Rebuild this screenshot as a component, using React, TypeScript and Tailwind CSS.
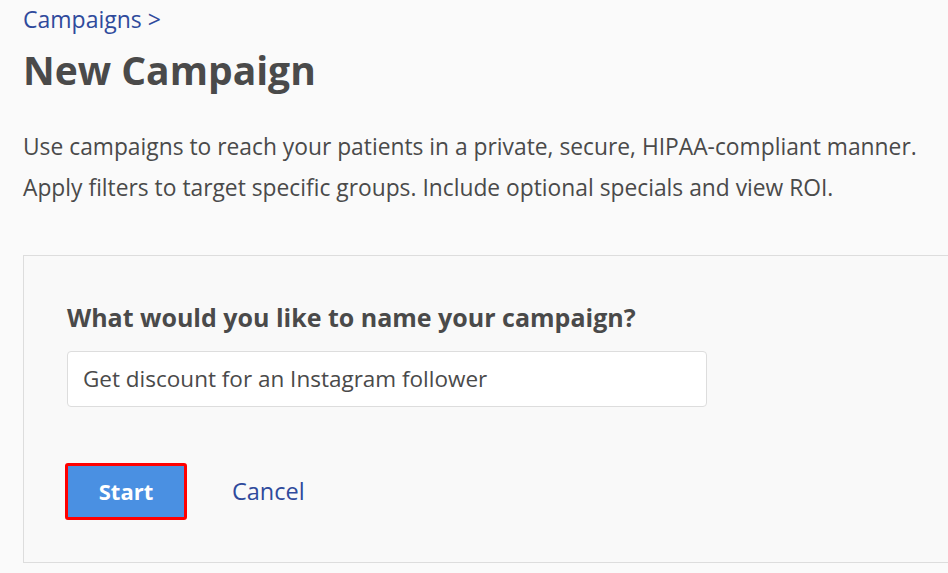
export default function App() {
  return (
    <div className="min-h-[573px] w-[948px] overflow-hidden bg-[#fafafa] text-[#4a4a4a]" style={{ fontFamily: "'Open Sans', Lato, sans-serif" }}>
      <div className="pl-[23px] pt-[4px]">
        <div className="text-[23px] leading-[30px] text-[#2f4a9c]">Campaigns &gt;</div>
        <h1 className="mt-[12px] text-[39px] font-bold leading-[48px] text-[#4a4a4a]">New Campaign</h1>
        <p className="mt-[32px] text-[22.8px] leading-[41px]">
          Use campaigns to reach your patients in a private, secure, HIPAA-compliant manner.
          <br />
          Apply filters to target specific groups. Include optional specials and view ROI.
        </p>
        <div className="mt-[47px] h-[308px] w-[960px] border border-[#dddddd] bg-[#f9f9f9] pl-[43px] pt-[45px]">
          <div className="text-[25px] font-bold leading-[32px] text-[#4a4a4a]">What would you like to name your campaign?</div>
          <div className="mt-[18px] flex h-[56px] w-[640px] items-center rounded-[4px] border border-[#dddddd] bg-white pl-[15px] text-[22.5px]">
            Get discount for an Instagram follower
          </div>
          <div className="mt-[56px] flex items-center">
            <button className="ml-[-2px] h-[57px] w-[122px] rounded-[3px] border-[3px] border-[#ff0000] bg-[#4a90e2] text-[22px] font-bold text-white">Start</button>
            <span className="ml-[45px] text-[23.5px] text-[#2f4a9c]">Cancel</span>
          </div>
        </div>
      </div>
    </div>
  );
}
